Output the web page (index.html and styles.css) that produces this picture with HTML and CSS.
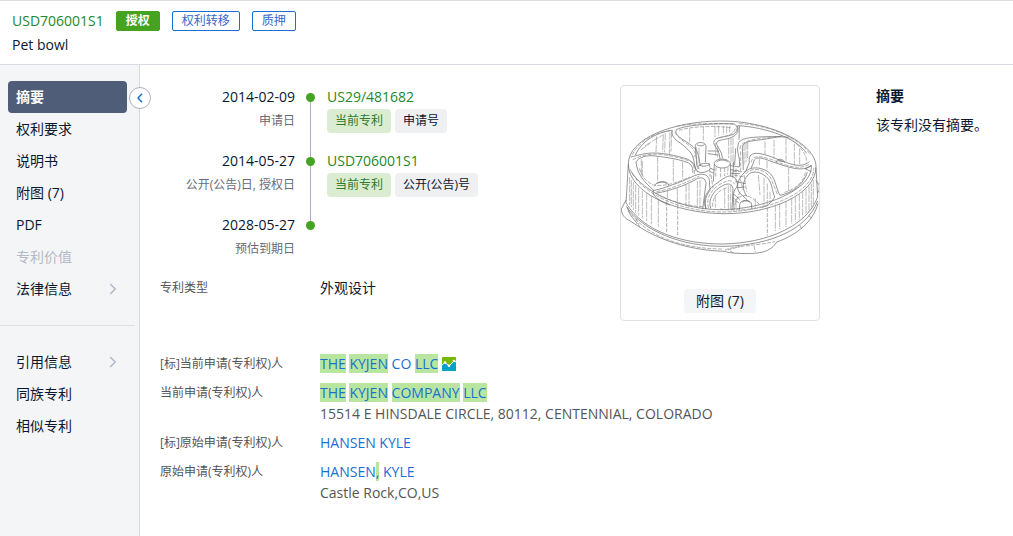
FILE: index.html
```html
<!DOCTYPE html>
<html lang="zh-CN">
<head>
<meta charset="utf-8">
<meta name="viewport" content="width=device-width, initial-scale=1">
<title>USD706001S1 Pet bowl</title>
<link rel="stylesheet" href="styles.css">
</head>
<body>
<header class="header">
  <div class="header-row">
    <a class="link-green" href="#">USD706001S1</a>
    <span class="badge badge-solid">授权</span>
    <span class="badge">权利转移</span>
    <span class="badge">质押</span>
  </div>
  <h1 class="title">Pet bowl</h1>
</header>
<div class="layout">
  <nav class="sidebar">
    <ul class="menu">
      <li><a class="menu-item active" href="#">摘要</a></li>
      <li><a class="menu-item" href="#">权利要求</a></li>
      <li><a class="menu-item" href="#">说明书</a></li>
      <li><a class="menu-item" href="#">附图 (7)</a></li>
      <li><a class="menu-item" href="#">PDF</a></li>
      <li><a class="menu-item disabled" aria-disabled="true">专利价值</a></li>
      <li><a class="menu-item" href="#">法律信息<svg class="chevron" viewBox="0 0 8 12"><path d="M1.2 1 6.2 6 1.2 11"/></svg></a></li>
    </ul>
    <ul class="menu">
      <li><a class="menu-item" href="#">引用信息<svg class="chevron" viewBox="0 0 8 12"><path d="M1.2 1 6.2 6 1.2 11"/></svg></a></li>
      <li><a class="menu-item" href="#">同族专利</a></li>
      <li><a class="menu-item" href="#">相似专利</a></li>
    </ul>
    <button class="collapse" type="button" aria-label="收起"><svg viewBox="0 0 6 10"><path d="M5 .7 1 5 5 9.3"/></svg></button>
  </nav>
  <main class="content">
    <div class="overview">
      <div class="details">
        <ol class="timeline">
          <li class="event">
            <div class="when"><time>2014-02-09</time><span class="caption">申请日</span></div>
            <div class="what"><a class="link-green" href="#">US29/481682</a>
              <div class="tags"><span class="tag tag-green">当前专利</span><span class="tag">申请号</span></div></div>
          </li>
          <li class="event">
            <div class="when"><time>2014-05-27</time><span class="caption">公开(公告)日, 授权日</span></div>
            <div class="what"><a class="link-green" href="#">USD706001S1</a>
              <div class="tags"><span class="tag tag-green">当前专利</span><span class="tag">公开(公告)号</span></div></div>
          </li>
          <li class="event">
            <div class="when"><time>2028-05-27</time><span class="caption">预估到期日</span></div>
            <div class="what"></div>
          </li>
        </ol>
        <dl class="fields">
          <dt>专利类型</dt>
          <dd class="strong">外观设计</dd>
        </dl>
      </div>
      <figure class="figure">
        <svg class="drawing" viewBox="33 105 594 480" role="img" aria-label="Pet bowl">
          <!-- rim -->
          <g class="ink">
            <path d="M55 268C54 190 190 139 330 138C480 137 618 205 618 275C618 360 480 416 345 416C190 416 56 350 55 268Z"/>
            <path d="M76 240C100 190 150 170 187 166M64 290C100 350 210 403 330 404C460 404 610 345 604 270M590 235C560 190 470 157 384 152"/>
            <path class="dash" d="M60 282C90 355 210 410 335 411C480 410 612 350 611 280M200 154C240 145 330 144 370 147M388 146C480 150 570 190 602 240"/>
            <path class="dash" d="M66 240C90 195 140 172 180 167"/>
          </g>
          <!-- wall and base -->
          <g class="ink">
            <path d="M55 268 48 384C100 470 220 508 340 507C470 504 590 455 623 366L618 278"/>
            <path d="M48 375 34 402C34 420 45 430 62 439L100 463C180 510 270 527 345 529M49 394C100 470 220 516 345 514C480 510 590 465 623 378"/>
            <path d="M82 447C77 436 58 424 52 397M345 528 352 532C390 537 430 537 455 532C480 526 493 513 500 501C560 480 610 440 624 385M618 317 628 330 627 350 621 352"/>
            <path class="dash" d="M345 525C370 513 440 512 495 500M55 405C110 490 230 522 340 522M370 534 355 524 390 515M432 513 436 531M78 430 90 458M575 462 568 448M605 430 596 422"/>
          </g>
          <g class="ink soft">
            <path d="M59 306V390M64 315V397M70 322V405M77 330V413M86 338V422M97 347V430M110 355V438M124 363V448M145 372V455"/>
            <path d="M610 315V392M604 326V402M597 334V412M588 343V420M578 350V428M568 358V436M556 364V442M545 370V447M528 378V456M509 384V463M496 389V468"/>
            <path class="dash" d="M170 380V472M203 390V481M472 398V482"/>
          </g>
          <!-- upper compartment -->
          <g class="ink">
            <path d="M187 166C184 180 190 188 202 198C228 216 246 232 250 250C254 265 252 278 264 291"/>
            <path d="M199 164C194 176 204 184 222 196C246 211 260 220 265 240L271 272"/>
            <path d="M199 164C230 147 340 145 372 147C386 152 384 170 370 178C345 188 318 184 312 198C308 212 325 220 328 240L330 252M382 152C388 170 380 182 358 190C330 196 318 196 320 208C326 222 336 230 337 250"/>
            <path class="dash" d="M195 170C205 200 252 208 257 240C262 260 256 270 270 285M207 166C250 152 330 153 362 158M376 160C373 178 350 183 320 191"/>
            <path d="M256 214C255 199 287 198 288 214L286 262M256 214 261 274M261 209C266 214 280 214 284 208M388 152 387 194M293 228 327 228M293 236 325 240"/>
          </g>
          <g class="ink soft">
            <path d="M239 160V202M280 156V196M315 154V186M326 153V182M340 153V180M350 153V177M359 153V172M185 168 183 230M180 172 178 238M166 174 164 232M160 178 158 230M140 184 138 232M105 212 158 180M92 225 120 205"/>
            <path d="M257 238 250 248M317 203V242M323 213V248M356 192V250M363 190V262M369 188V270M260 217V270M267 218V265"/>
          </g>
          <!-- left compartments -->
          <g class="ink">
            <path d="M62 246C80 242 96 236 125 234C165 233 205 244 228 251C246 257 255 268 258 288"/>
            <path d="M78 261C84 248 110 239 136 243C180 248 216 255 236 264C246 272 250 280 248 293M78 261C82 300 104 322 132 347"/>
            <path d="M130 347C170 338 220 318 253 302C276 293 296 298 298 316L300 346C288 362 283 378 288 402"/>
            <path d="M136 355C180 348 230 330 262 311C277 305 286 310 288 325L278 403M130 347C124 362 150 380 180 390"/>
            <path d="M134 334C134 317 175 314 176 332M140 326C150 320 164 320 171 326"/>
            <path class="dash" d="M68 254C90 243 110 236 150 238C190 242 230 254 242 260C252 268 254 278 253 298M88 280C94 302 108 320 130 330C160 335 196 326 240 306M145 360C190 382 240 394 280 395M140 350C185 342 235 320 268 303"/>
            <path d="M264 282C260 262 300 262 300 270M262 289C275 297 295 290 303 280M268 270C280 276 292 274 298 268"/>
          </g>
          <g class="ink soft">
            <path d="M94 252V300M97 258V304M143 246V317M190 254V320M218 260V312M172 348V380M202 340V388M228 330V394M237 327V397M262 318V398M270 316V400"/>
          </g>
          <!-- centre post -->
          <g class="ink">
            <path d="M313 268C309 248 358 247 361 266C357 282 321 284 313 268ZM313 268 310 320M361 266 362 304"/>
            <path d="M320 262C325 253 349 253 354 262M300 279 313 285M300 290 310 294M362 272 388 276M362 284 388 288M362 295 390 296M371 260 368 308"/>
            <path class="dash" d="M318 277 317 310M332 279V307M344 279V303M354 277 353 299M298 265 300 305M303 300 309 340M368 290 405 290M372 300 402 306M378 280V325"/>
          </g>
          <!-- right compartments -->
          <g class="ink">
            <path d="M384 212C383 198 398 190 430 187C470 184 510 184 534 187M377 220 374 270M384 212C378 230 392 245 388 276"/>
            <path d="M397 218C397 205 410 199 440 196C470 192 495 188 515 183M397 218 400 285"/>
            <path d="M418 262C416 246 420 236 438 235C470 236 502 254 530 263C556 272 580 276 598 260M430 264C432 248 444 246 464 252C500 265 536 278 560 281C580 283 595 280 603 272M418 262 407 290M430 264 423 280"/>
            <path d="M402 294C420 272 452 276 474 290C498 307 495 335 510 361M414 300C430 282 460 294 474 311C487 327 486 346 494 366C482 388 468 394 455 397"/>
            <path d="M510 361C545 354 580 330 592 292M500 263C496 252 520 247 524 263M504 257 520 260M603 272 585 281 604 290"/>
            <path class="dash" d="M390 222C388 200 425 188 525 185M424 262C425 242 450 238 500 260C545 278 575 284 600 266M407 297C430 270 475 287 486 318L502 358M586 292C582 325 550 345 518 354M534 187C570 210 591 239 590 262M392 230V288"/>
          </g>
          <g class="ink soft">
            <path d="M402 206V268M408 204V262M413 202V250M465 199V238M492 194V251M528 190V260M553 206V272M569 220V274M448 252V270M471 258V284M536 278V348M462 308V394M445 300 450 360M472 325V388M480 350V382"/>
          </g>
          <!-- front compartment -->
          <g class="ink">
            <path d="M288 402C276 375 288 348 316 328C335 314 350 302 362 303C382 307 385 326 380 337C365 351 371 375 372 404"/>
            <path d="M302 400C293 372 312 344 340 331C355 324 365 326 369 340L366 405M402 294C380 315 378 342 390 355L412 375M414 300C396 320 395 344 412 365"/>
            <path d="M389 390C389 372 425 371 425 390V402M389 390V404M396 381C402 376 414 376 419 382M372 358 389 374M372 370 386 384M380 320 406 326M382 338 404 336"/>
            <path class="dash" d="M296 400C286 368 306 342 330 328C352 315 366 312 374 328M308 395C306 370 322 346 350 338M372 380C400 350 420 360 448 388M330 402C370 408 430 405 460 393M390 310 400 345M402 300 410 350M374 390 390 350"/>
          </g>
          <g class="ink soft">
            <path d="M316 360V398M344 342V400M355 332V402M362 330V404M378 378V403M436 370V400"/>
          </g>
        </svg>
        <button class="figure-button" type="button">附图 (7)</button>
      </figure>
      <section class="abstract">
        <h2>摘要</h2>
        <p>该专利没有摘要。</p>
      </section>
    </div>
    <dl class="fields">
      <dt>[标]当前申请(专利权)人</dt>
      <dd><a class="link-blue" href="#"><mark>THE</mark> <mark>KYJEN</mark> CO <mark>LLC</mark></a>
        <svg class="chart-icon" viewBox="0 0 14 14"><rect width="14" height="14" rx="1" fill="#76b900"/><path fill="#00a3c4" d="M0 8 3 5l4 4 5-5 2 1v8q0 1-1 1H1q-1 0-1-1z"/><path class="trend" d="M0 8 3 5.500l4 3.500 5-5 2 1"/><circle cx="3" cy="5.500" r="1.300" fill="#fff"/><circle cx="7" cy="8.700" r="1.300" fill="#fff"/><circle cx="12" cy="4" r="1.300" fill="#fff"/></svg></dd>
      <dt>当前申请(专利权)人</dt>
      <dd><a class="link-blue" href="#"><mark>THE</mark> <mark>KYJEN</mark> <mark>COMPANY</mark> <mark>LLC</mark></a><div>15514 E HINSDALE CIRCLE, 80112, CENTENNIAL, COLORADO</div></dd>
      <dt>[标]原始申请(专利权)人</dt>
      <dd><a class="link-blue" href="#">HANSEN KYLE</a></dd>
      <dt>原始申请(专利权)人</dt>
      <dd><a class="link-blue" href="#">HANSEN<mark>,</mark> KYLE</a><div>Castle Rock,CO,US</div></dd>
    </dl>
  </main>
</div>
</body>
</html>
```

FILE: styles.css
```css
* {
  box-sizing: border-box;
}

body {
  display: flex;
  flex-direction: column;
  min-height: 100vh;
  margin: 0;
  background: #fff;
  color: #0b1730;
  font: 14px/20px "Open Sans", "Noto Sans CJK SC", sans-serif;
}

a {
  color: inherit;
  text-decoration: none;
}

ul, ol, dl, dd, h1, h2, p, figure {
  margin: 0;
  padding: 0;
  list-style: none;
}

button {
  font: inherit;
  color: inherit;
  cursor: pointer;
}

.link-green {
  color: #25882a;
}

.link-blue {
  color: #1970d2;
}

.header {
  padding: 10px 12px 9px;
  border-top: 1px solid #dcdee2;
  border-bottom: 1px solid #d9dbe3;
}

.header-row {
  display: flex;
  gap: 12px;
  margin-bottom: 4px;
}

.badge {
  padding: 0 9px;
  border: 1px solid #1970d2;
  border-radius: 2px;
  color: #3568cc;
  font-size: 12px;
  line-height: 18px;
}

.badge-solid {
  border-color: #45a321;
  background: #45a321;
  color: #fff;
  font-weight: 700;
}

.title {
  font-size: 14px;
  font-weight: 400;
}

.layout {
  display: flex;
  flex: 1;
}

.sidebar {
  position: relative;
  flex: none;
  width: 140px;
  padding-top: 16px;
  border-right: 1px solid #d9dbe0;
  background: #f3f5f7;
}

.menu {
  margin-right: 4px;
  padding: 0 8px 20px;
}

.menu + .menu {
  padding-top: 20px;
  border-top: 1px solid #dcdfe4;
}

.menu-item {
  display: flex;
  align-items: center;
  justify-content: space-between;
  height: 32px;
  padding: 0 10px 0 8px;
  border-radius: 4px;
}

.menu-item.active {
  background: #4f5d78;
  color: #fff;
  font-weight: 700;
}

.menu-item.disabled {
  color: #b3bac6;
}

.chevron {
  width: 8px;
  height: 12px;
  fill: none;
  stroke: #b3b8c8;
  stroke-width: 1.5;
}

.collapse {
  display: flex;
  align-items: center;
  justify-content: center;
  position: absolute;
  top: 22px;
  right: -12px;
  width: 22px;
  height: 22px;
  padding: 0;
  border: 1px solid #aab0c2;
  border-radius: 50%;
  background: #fff;
}

.collapse svg {
  width: 6px;
  height: 10px;
  fill: none;
  stroke: #1970d2;
  stroke-width: 1.5;
}

.content {
  flex: 1;
  min-width: 0;
  padding: 20px 16px 20px 20px;
}

.overview {
  display: grid;
  grid-template-columns: 1fr 200px 177px;
  margin-bottom: 32px;
}

.event {
  display: grid;
  grid-template-columns: 135px 1fr;
  column-gap: 15px;
  min-height: 64px;
  line-height: 24px;
}

.event:last-child {
  min-height: 48px;
}

.when {
  display: flex;
  flex-direction: column;
  text-align: right;
}

.caption {
  color: #666c78;
  font-size: 12px;
}

.what {
  position: relative;
  padding-left: 17px;
}

.what::before {
  content: "";
  position: absolute;
  top: 8px;
  left: -4px;
  width: 9px;
  height: 9px;
  border-radius: 50%;
  background: #45a321;
}

.event:not(:last-child) .what::after {
  content: "";
  position: absolute;
  top: 17px;
  bottom: -8px;
  left: 0;
  width: 1px;
  background: #a5acbe;
}

.tags {
  display: flex;
  gap: 4px;
}

.tag {
  padding: 0 8px;
  border-radius: 4px;
  background: #eef0f2;
  font-size: 12px;
}

.tag-green {
  background: #daecd2;
  color: #327a2c;
}

.fields {
  display: grid;
  grid-template-columns: 160px 1fr;
  row-gap: 8px;
  color: #555;
  line-height: 21px;
}

.details .fields {
  margin-top: 16px;
}

.fields dt {
  font-size: 12px;
}

.strong {
  color: #0b1730;
}

mark {
  background: #b8e6a0;
  color: inherit;
}

.chart-icon {
  width: 14px;
  height: 14px;
  vertical-align: -2px;
}

.trend {
  fill: none;
  stroke: #fff;
}

.figure {
  display: flex;
  flex-direction: column;
  align-items: center;
  padding: 24px 0 7px;
  border: 1px solid #dfe1e5;
  border-radius: 4px;
}

.drawing {
  width: 100%;
  margin-bottom: 19px;
}

.ink {
  fill: none;
  stroke: #606060;
  stroke-width: 2;
  stroke-linejoin: round;
}

.soft {
  stroke: #999;
  stroke-dasharray: 22 3;
}

.dash {
  stroke: #888;
  stroke-dasharray: 12 4;
}

.figure-button {
  height: 24px;
  padding: 0 12px;
  border: 0;
  border-radius: 4px;
  background: #f3f5f7;
}

.abstract {
  padding-left: 56px;
}

.abstract h2 {
  margin-bottom: 8px;
  font-size: 14px;
  line-height: 21px;
}

.abstract p {
  line-height: 21px;
}
```
